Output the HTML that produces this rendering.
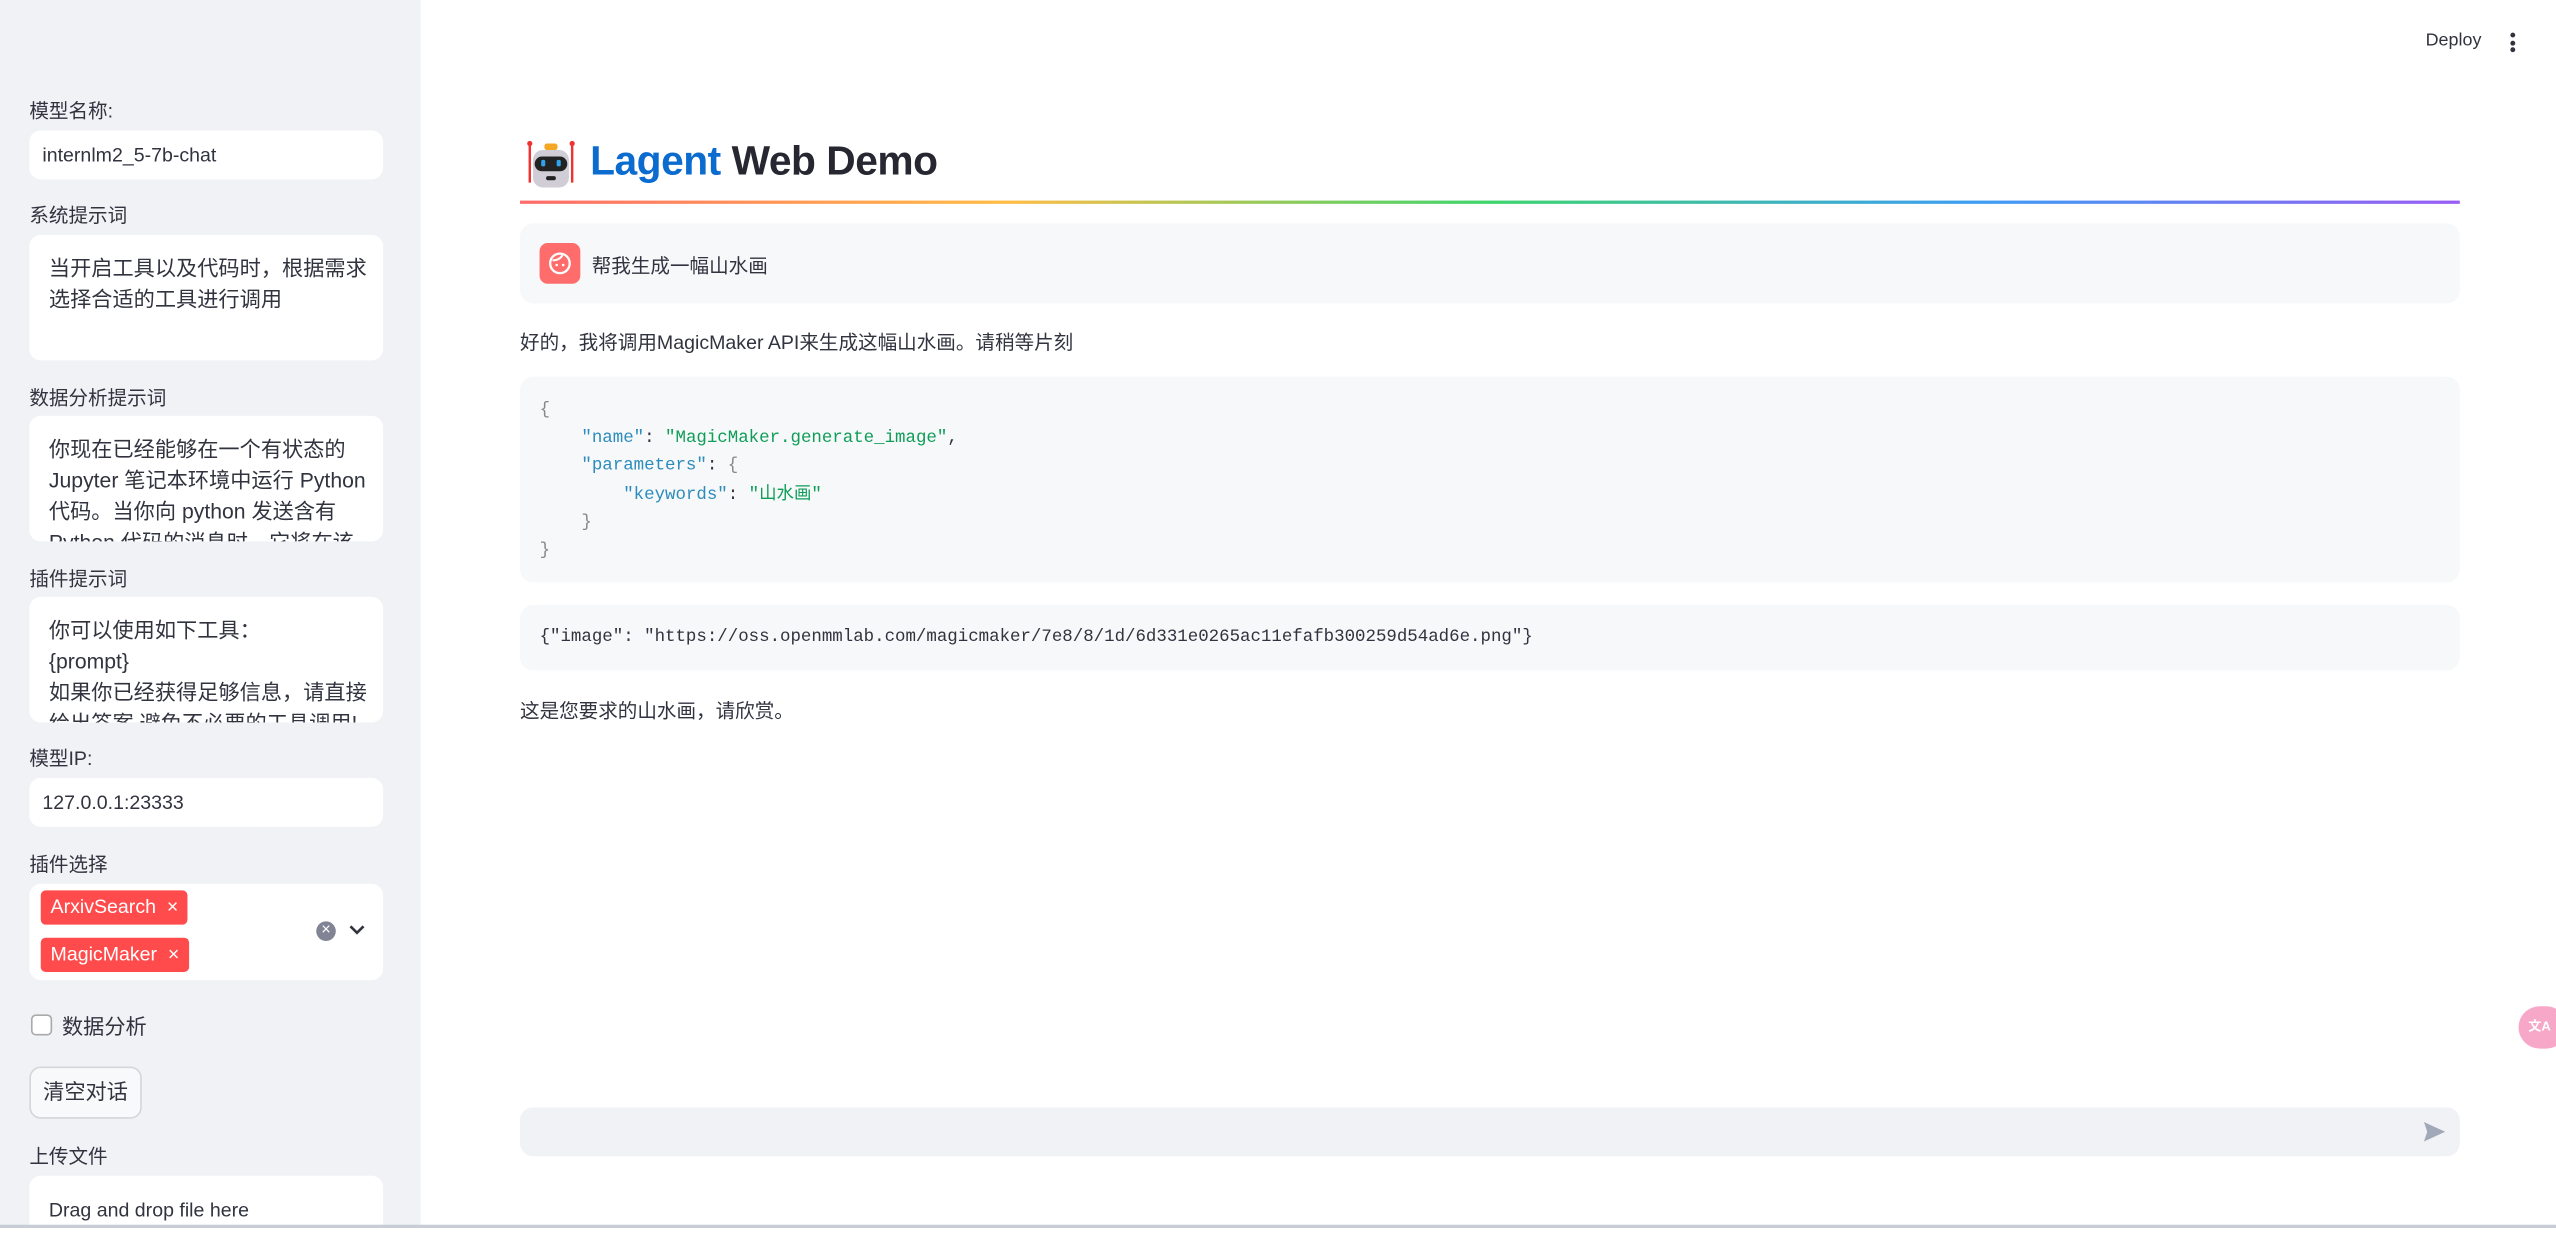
<!DOCTYPE html>
<html><head><meta charset="utf-8"><style>
html,body{margin:0;padding:0;width:2556px;height:1228px;overflow:hidden;background:#fff}
#w{position:absolute;left:0;top:0;width:1568px;height:753px;transform:scale(1.6301,1.6308);transform-origin:0 0;font-family:"Liberation Sans","Noto Sans CJK SC",sans-serif;color:#31333f}
.a{position:absolute}
#sb{left:0;top:0;width:258px;height:753px;background:#f0f2f6}
.lb{font-size:12px;color:#31333f;left:18px}
.in{left:18px;width:217px;background:#fff;border-radius:7px;font-size:12px;box-sizing:border-box;padding-left:8px;overflow:hidden}
.ta{padding:11px 4px 0 12px;line-height:19px;font-size:13px}
.tag{background:#ff4b4b;color:#fff;font-size:12px;border-radius:3px;padding:0 6px;height:21px;line-height:21px;left:25px}
.mono{font-family:"Liberation Mono","Noto Sans CJK SC",monospace;font-size:10.7px;color:#31333f}
.s{color:#0f9d58}.k{color:#2c8cbb}.p{color:#888}
</style></head><body><div id="w">
<div id="sb" class="a"></div>
<div class="a lb" style="top:59px">模型名称:</div>
<div class="a in" style="top:80px;height:30px;line-height:30px">internlm2_5-7b-chat</div>
<div class="a lb" style="top:123px">系统提示词</div>
<div class="a in ta" style="top:144px;height:77px">当开启工具以及代码时，根据需求选择合适的工具进行调用</div>
<div class="a lb" style="top:235px">数据分析提示词</div>
<div class="a in ta" style="top:255px;height:77px">你现在已经能够在一个有状态的 Jupyter 笔记本环境中运行 Python 代码。当你向 python 发送含有 Python 代码的消息时，它将在该</div>
<div class="a lb" style="top:346px">插件提示词</div>
<div class="a in ta" style="top:366px;height:77px">你可以使用如下工具：<br>{prompt}<br>如果你已经获得足够信息，请直接给出答案.避免不必要的工具调用!</div>
<div class="a lb" style="top:456px">模型IP:</div>
<div class="a in" style="top:477px;height:30px;line-height:30px">127.0.0.1:23333</div>
<div class="a lb" style="top:521px">插件选择</div>
<div class="a in" style="top:542px;height:59px"></div>
<div class="a tag" style="top:546px">ArxivSearch &nbsp;×</div>
<div class="a tag" style="top:575px">MagicMaker &nbsp;×</div>
<div class="a" style="left:194px;top:565px;width:12px;height:12px;border-radius:50%;background:#808495;color:#fff;font-size:10px;line-height:12px;text-align:center">×</div>
<svg class="a" style="left:214px;top:566px" width="10" height="8"><path d="M1 2l4 4 4-4" stroke="#31333f" stroke-width="1.6" fill="none"/></svg>
<div class="a" style="left:19px;top:622px;width:11px;height:11px;border:1px solid #aaa;border-radius:3px;background:#fff"></div>
<div class="a" style="left:38px;top:619px;font-size:13px">数据分析</div>
<div class="a" style="left:18px;top:654px;width:69px;height:32px;box-sizing:border-box;border:1px solid #d6d6d9;border-radius:7px;background:#f8f9fb;font-size:13px;line-height:30px;text-align:center">清空对话</div>
<div class="a lb" style="top:700px">上传文件</div>
<div class="a in" style="top:721px;height:40px;padding:14px 0 0 12px;font-size:12px">Drag and drop file here</div>

<div class="a" style="left:1488px;top:19px;font-size:11px">Deploy</div>
<div class="a" style="left:1540px;top:20px;width:3px;font-size:0"><div style="width:3px;height:3px;border-radius:50%;background:#31333f;margin-bottom:1.5px"></div><div style="width:3px;height:3px;border-radius:50%;background:#31333f;margin-bottom:1.5px"></div><div style="width:3px;height:3px;border-radius:50%;background:#31333f"></div></div>

<svg class="a" style="left:322px;top:85px" width="32" height="32" viewBox="0 0 32 32"><line x1="3" y1="3" x2="3" y2="27" stroke="#e33" stroke-width="1.5"/><line x1="29" y1="3" x2="29" y2="27" stroke="#e33" stroke-width="1.5"/><circle cx="3" cy="3" r="1.6" fill="#e33"/><circle cx="29" cy="3" r="1.6" fill="#e33"/><rect x="12" y="3" width="8" height="4" rx="1.5" fill="#f5a623"/><rect x="5" y="7" width="22" height="23" rx="6" fill="#d0cdd6"/><rect x="6" y="11" width="20" height="9" rx="4.5" fill="#222"/><rect x="10" y="13" width="2.5" height="4" rx="1" fill="#2fa3ee"/><rect x="19.5" y="13" width="2.5" height="4" rx="1" fill="#2fa3ee"/><rect x="13" y="23" width="6" height="2.5" rx="1.2" fill="#222"/></svg>
<div class="a" style="left:362px;top:85px;font-size:25px;font-weight:bold;letter-spacing:-0.3px"><span style="color:#0b6bcf">Lagent</span> <span style="color:#262730">Web Demo</span></div>
<div class="a" style="left:319px;top:123px;width:1190px;height:2px;background:linear-gradient(90deg,#ff6b6b,#ffbd45,#3dd56d,#3d9df3,#9a5cf5)"></div>

<div class="a" style="left:319px;top:137px;width:1190px;height:49px;background:#f7f8fa;border-radius:8px"></div>
<div class="a" style="left:331px;top:149px;width:25px;height:25px;background:#ff6c6c;border-radius:5px"></div>
<svg class="a" style="left:336px;top:154px" width="15" height="15" viewBox="0 0 15 15"><circle cx="7.5" cy="7.5" r="6" stroke="#fff" stroke-width="1.4" fill="none"/><path d="M3 5.5c2 .5 5-1 6-3" stroke="#fff" stroke-width="1.3" fill="none"/><circle cx="5.5" cy="8.5" r=".8" fill="#fff"/><circle cx="9.5" cy="8.5" r=".8" fill="#fff"/></svg>
<div class="a" style="left:363px;top:154px;font-size:12px">帮我生成一幅山水画</div>

<div class="a" style="left:319px;top:201px;font-size:12px">好的，我将调用MagicMaker API来生成这幅山水画。请稍等片刻</div>

<div class="a" style="left:319px;top:231px;width:1190px;height:126px;background:#f7f8fa;border-radius:8px"></div>
<pre class="a mono" style="left:331px;top:244px;margin:0;line-height:17.2px"><span class="p">{</span>
    <span class="k">"name"</span>: <span class="s">"MagicMaker.generate_image"</span>,
    <span class="k">"parameters"</span>: <span class="p">{</span>
        <span class="k">"keywords"</span>: <span class="s">"山水画"</span>
    <span class="p">}</span>
<span class="p">}</span></pre>
<div class="a" style="left:319px;top:371px;width:1190px;height:40px;background:#f7f8fa;border-radius:8px"></div>
<div class="a mono" style="left:331px;top:385px">{"image": "https://oss.openmmlab.com/magicmaker/7e8/8/1d/6d331e0265ac11efafb300259d54ad6e.png"}</div>

<div class="a" style="left:319px;top:427px;font-size:12px">这是您要求的山水画，请欣赏。</div>

<div class="a" style="left:319px;top:679px;width:1190px;height:30px;background:#f0f2f6;border-radius:8px"></div>
<svg class="a" style="left:1486px;top:687px" width="15" height="14" viewBox="0 0 15 14"><path d="M1 1l13 6-13 6 2-6z" fill="#a3a8b8"/></svg>
<div class="a" style="left:1545px;top:617px;width:30px;height:26px;border-radius:13px;background:#f7a8c8"></div>
<div class="a" style="left:1551px;top:624px;font-size:8px;color:#fff;font-weight:bold">文A</div>
<div class="a" style="left:0;top:751px;width:1568px;height:2px;background:#c8ccd4"></div>
</div></body></html>
